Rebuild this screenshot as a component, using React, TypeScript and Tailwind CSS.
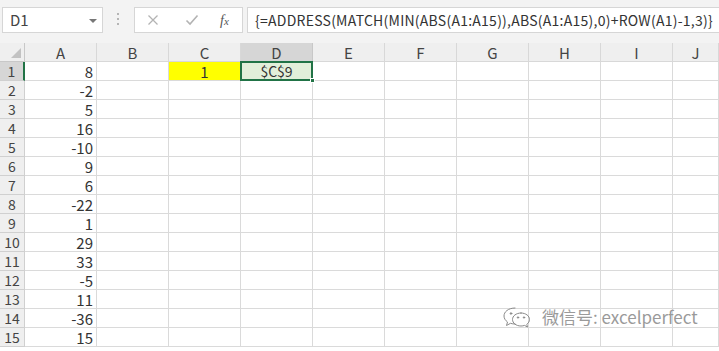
import React from 'react';

const cols = ['A', 'B', 'C', 'D', 'E', 'F', 'G', 'H', 'I', 'J'];
const values = ['8', '-2', '5', '16', '-10', '9', '6', '-22', '1', '29', '33', '-5', '11', '-36', '15'];

const font = { fontFamily: '"Noto Sans CJK SC", "Noto Sans", sans-serif' };

const WeChatIcon = () => (
  <svg width="32" height="24" viewBox="0 0 32 24" fill="none" stroke="#8a8a8a" strokeWidth="1" strokeLinecap="round">
    <path d="M13 3 C6 3 2 7 2 11 C2 13.5 3.5 15.5 5.5 17 L4.5 20.5 L8.5 18.3 C10 18.8 11.5 19 13 19" />
    <path d="M19 8 C14 8 10.5 11 10.5 14.5 C10.5 18 14 21 19 21 C20.3 21 21.5 20.8 22.5 20.4 L25.5 22 L24.8 19.3 C26.5 18 27.5 16.3 27.5 14.5 C27.5 11 24 8 19 8 Z" />
    <circle cx="9" cy="8.5" r="0.8" fill="#8a8a8a" />
    <circle cx="16" cy="12.5" r="0.7" fill="#8a8a8a" />
    <circle cx="22" cy="12.5" r="0.7" fill="#8a8a8a" />
  </svg>
);

const Toolbar = () => (
  <div className="flex h-[43px] items-start bg-[#f3f3f3] pt-[7px]">
    <div className="ml-[2px] flex h-[26px] w-[101px] items-center justify-between border border-[#d6d6d6] bg-white pl-[7px] pr-[5px]">
      <span className="text-[15px] text-[#444]">D1</span>
      <span className="mt-[1px] h-0 w-0 border-x-[4px] border-t-[4px] border-x-transparent border-t-[#777]" />
    </div>
    <div className="ml-[14px] mt-[6px] flex flex-col gap-[3px]">
      <span className="h-[2px] w-[2px] bg-[#b5b5b5]" />
      <span className="h-[2px] w-[2px] bg-[#b5b5b5]" />
      <span className="h-[2px] w-[2px] bg-[#b5b5b5]" />
    </div>
    <div className="ml-[15px] flex h-[26px] w-[109px] items-center border border-[#d6d6d6] bg-white">
      <svg className="ml-[12px]" width="12" height="12" viewBox="0 0 12 12" stroke="#b3b3b3" strokeWidth="1.3">
        <path d="M1.5 1.5 L10.5 10.5 M10.5 1.5 L1.5 10.5" />
      </svg>
      <svg className="ml-[26px]" width="14" height="12" viewBox="0 0 14 12" stroke="#b3b3b3" strokeWidth="1.6" fill="none">
        <path d="M1.5 6.5 L5 10 L12.5 1.5" />
      </svg>
      <span className="ml-[21px] text-[14px] italic text-[#555]" style={{ fontFamily: '"Liberation Serif", serif' }}>
        f<span className="text-[11px]">x</span>
      </span>
    </div>
    <div className="ml-[4px] flex h-[26px] flex-1 items-center border border-r-0 border-[#d6d6d6] bg-white pl-[7px]">
      <span className="text-[14px] tracking-[0.25px] text-[#333]">{'{=ADDRESS(MATCH(MIN(ABS(A1:A15)),ABS(A1:A15),0)+ROW(A1)-1,3)}'}</span>
    </div>
  </div>
);

const App = () => {
  return (
    <div className="relative h-[351px] w-[719px] overflow-hidden bg-white" style={font}>
      <Toolbar />
      <div className="grid grid-cols-[25px_repeat(9,72px)_1fr] text-[15px] leading-none text-[#333]">
        <div className="flex h-[19px] items-end justify-end border-r border-b border-[#c8c8c8] bg-[#efefef] pb-[3px] pr-[3px]">
          <svg width="10" height="10" viewBox="0 0 10 10">
            <path d="M10 0 L10 10 L0 10 Z" fill="#c2c2c2" />
          </svg>
        </div>
        {cols.map((c) => (
          <div
            key={c}
            className={`flex h-[19px] items-center justify-center border-r border-b text-[15px] text-[#444] ${
              c === 'D' ? 'border-b-[#217346] bg-[#d6d6d6] border-r-[#c8c8c8]' : 'border-[#d8d8d8] bg-[#efefef]'
            }`}
          >
            {c}
          </div>
        ))}
        {values.map((v, i) => (
          <React.Fragment key={i}>
            <div
              className={`flex h-[19px] items-center justify-center border-b border-r text-[14px] text-[#444] ${
                i === 0 ? 'border-r-2 border-r-[#217346] border-b-[#d0d0d0] bg-[#d6d6d6]' : 'border-[#d0d0d0] bg-[#efefef]'
              }`}
            >
              {i + 1}
            </div>
            {cols.map((c) => {
              let cls = 'h-[19px] border-r border-b border-[#dadada] flex items-center';
              let content: React.ReactNode = null;
              if (c === 'A') {
                cls += ' justify-end pr-[3px]';
                content = v;
              }
              if (c === 'C' && i === 0) {
                cls += ' bg-[#ffff00] justify-center';
                content = '1';
              }
              if (c === 'D' && i === 0) {
                cls += ' bg-[#e2efda] justify-center relative';
                content = (
                  <>
                    <span className="text-[14px]">$C$9</span>
                    <span className="absolute -left-px -top-px -right-px -bottom-px border-2 border-[#217346]" />
                    <span className="absolute -bottom-[3px] -right-[3px] h-[5px] w-[5px] border border-white bg-[#217346]" />
                  </>
                );
              }
              return (
                <div key={c} className={cls}>
                  {content}
                </div>
              );
            })}
          </React.Fragment>
        ))}
      </div>
      <div className="absolute left-[502px] top-[304px] flex items-center gap-[8px]">
        <WeChatIcon />
        <span className="text-[17px] text-[#9a9a9a]">微信号: excelperfect</span>
      </div>
    </div>
  );
};

export default App;
